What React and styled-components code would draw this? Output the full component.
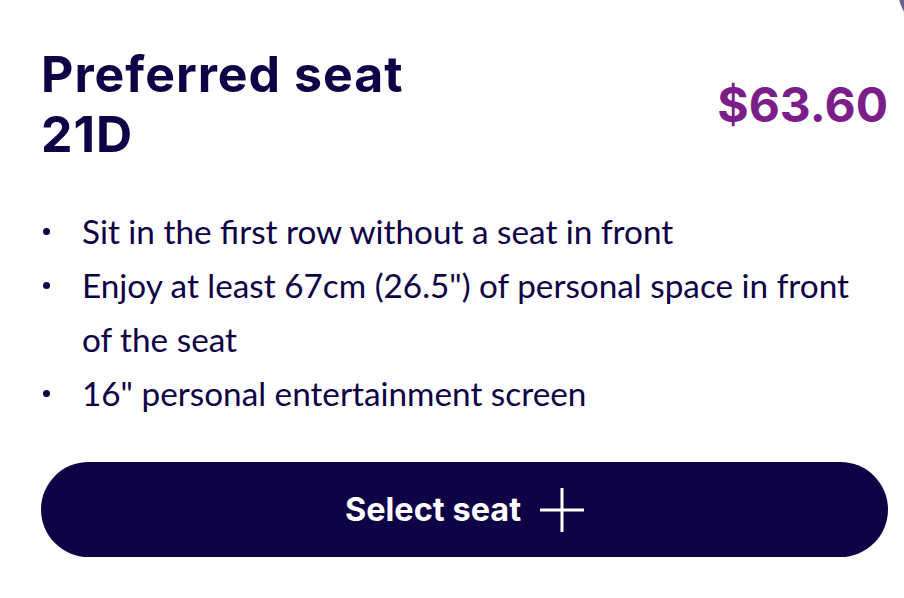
import React from "react";
import styled, { createGlobalStyle } from "styled-components";

const GlobalStyle = createGlobalStyle`
  html, body {
    margin: 0;
    padding: 0;
    background: #ffffff;
  }
  body {
    font-family: Lato, "Noto Sans", sans-serif;
    color: #0e0146;
    overflow: hidden;
  }
`;

const Card = styled.section`
  position: relative;
  width: 904px;
  height: 598px;
  box-sizing: border-box;
  padding: 44px 16px 0 41px;
  overflow: hidden;
`;

const CornerBlob = styled.div`
  position: absolute;
  left: 898px;
  top: -52px;
  width: 84px;
  height: 84px;
  border-radius: 50%;
  background: #67628f;
`;

const Header = styled.header`
  display: flex;
  align-items: center;
  justify-content: space-between;
`;

const Title = styled.h2`
  margin: 0;
  font-family: Inter, "Noto Sans", sans-serif;
  font-size: 50px;
  line-height: 60px;
  font-weight: 700;
  color: #0e0146;
  letter-spacing: 1px;
`;

const Price = styled.div`
  font-family: Inter, "Noto Sans", sans-serif;
  font-size: 48px;
  font-weight: 700;
  color: #7b1e89;
`;

const Features = styled.ul`
  margin: 40px 0 0;
  padding: 0 20px 0 0;
  list-style: none;
`;

const Feature = styled.li`
  position: relative;
  padding-left: 41px;
  font-size: 33.3px;
  line-height: 54px;
  color: #0e0146;

  &::before {
    content: "";
    position: absolute;
    left: 2px;
    top: 24px;
    width: 7px;
    height: 7px;
    border-radius: 50%;
    background: #0e0146;
  }
`;

const SelectButton = styled.button`
  display: flex;
  align-items: center;
  justify-content: center;
  gap: 19px;
  width: 100%;
  height: 95px;
  margin-top: 42px;
  border: none;
  border-radius: 48px;
  background: #0e0146;
  color: #ffffff;
  font-family: Inter, "Noto Sans", sans-serif;
  font-size: 32.5px;
  font-weight: 700;
  cursor: pointer;
`;

const PlusIcon = () => (
  <svg width="44" height="44" viewBox="0 0 44 44" fill="none">
    <path d="M22 0v44M0 22h44" stroke="#ffffff" strokeWidth="3" />
  </svg>
);

const features = [
  "Sit in the first row without a seat in front",
  'Enjoy at least 67cm (26.5") of personal space in front of the seat',
  '16" personal entertainment screen',
];

export default function App() {
  return (
    <>
      <GlobalStyle />
      <Card>
        <CornerBlob />
        <Header>
          <Title>
            Preferred seat
            <br />
            21D
          </Title>
          <Price>$63.60</Price>
        </Header>
        <Features>
          {features.map((text) => (
            <Feature key={text}>{text}</Feature>
          ))}
        </Features>
        <SelectButton>
          Select seat
          <PlusIcon />
        </SelectButton>
      </Card>
    </>
  );
}
